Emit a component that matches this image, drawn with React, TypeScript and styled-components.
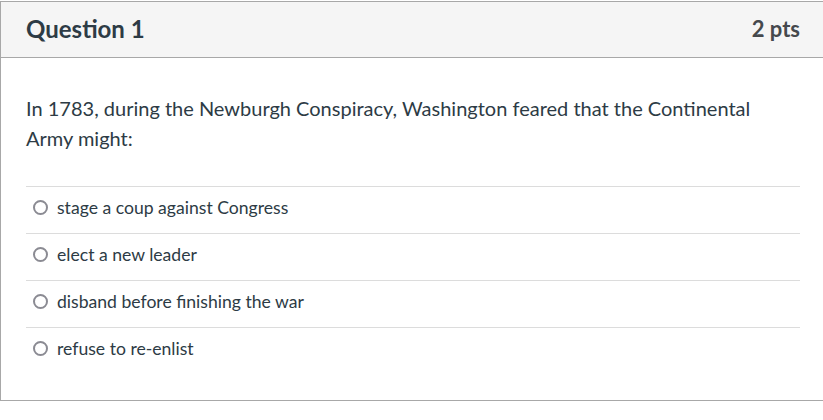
import React from "react";
import styled, { createGlobalStyle } from "styled-components";

const GlobalStyle = createGlobalStyle`
    body {
        margin: 0;
        background: #fff;
        font-family: Lato, "Noto Sans", sans-serif;
        color: #2d3b45;
    }
`;

const answers = [
    "stage a coup against Congress",
    "elect a new leader",
    "disband before finishing the war",
    "refuse to re-enlist",
];

const App: React.FC = () => {
    return (
        <>
            <GlobalStyle />
            <Card>
                <Header>
                    <Title>Question 1</Title>
                    <Points>2 pts</Points>
                </Header>
                <Body>
                    <QuestionText>
                        In 1783, during the Newburgh Conspiracy, Washington feared that the Continental
                        Army might:
                    </QuestionText>
                    <Answers>
                        {answers.map((a) => (
                            <Answer key={a}>
                                <Radio />
                                <AnswerLabel>{a}</AnswerLabel>
                            </Answer>
                        ))}
                    </Answers>
                </Body>
            </Card>
        </>
    );
};

const Card = styled.div`
    margin-top: 1px;
    width: 825px;
    height: 400px;
    box-sizing: border-box;
    border: 1px solid #a8a8a8;
    background: #fff;
`;

const Header = styled.div`
    display: flex;
    align-items: center;
    justify-content: space-between;
    height: 56px;
    box-sizing: border-box;
    padding: 0 24px 3px 25px;
    background: #f5f5f5;
    border-bottom: 1px solid #a8a8a8;
`;

const Title = styled.h2`
    margin: 0;
    font-size: 24px;
    font-weight: 700;
    color: #2d3b45;
`;

const Points = styled.span`
    font-size: 22px;
    font-weight: 700;
    color: #45494d;
`;

const Body = styled.div`
    padding: 35px 24px 0 25px;
`;

const QuestionText = styled.p`
    margin: 0 0 33px;
    max-width: 740px;
    font-size: 20px;
    line-height: 30px;
    color: #2d3b45;
`;

const Answers = styled.div`
    display: flex;
    flex-direction: column;
`;

const Answer = styled.label`
    display: flex;
    align-items: center;
    gap: 9px;
    height: 41px;
    padding: 0 0 5px 7px;
    border-top: 1px solid #dcdcdc;
`;

const Radio = styled.span`
    flex: none;
    width: 15px;
    height: 15px;
    box-sizing: border-box;
    border: 2px solid #8b8b93;
    border-radius: 50%;
    background: #fff;
`;

const AnswerLabel = styled.span`
    font-size: 17.6px;
    color: #2d3b45;
`;

export default App;
